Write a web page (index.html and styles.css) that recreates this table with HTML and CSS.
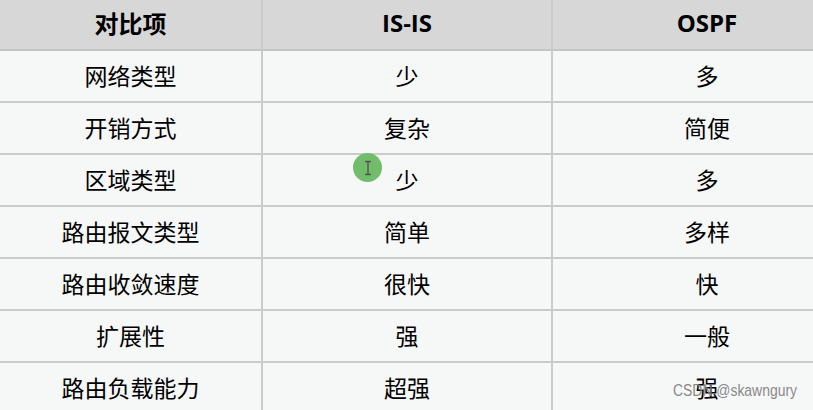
FILE: index.html
```html
<!DOCTYPE html>
<html lang="zh">
<head>
<meta charset="utf-8">
<link rel="stylesheet" href="styles.css">
</head>
<body>
<div class="stage">
  <div class="table">
    <div class="cell head">对比项</div>
    <div class="cell head">IS-IS</div>
    <div class="cell head">OSPF</div>

    <div class="cell">网络类型</div><div class="cell">少</div><div class="cell">多</div>
    <div class="cell">开销方式</div><div class="cell">复杂</div><div class="cell">简便</div>
    <div class="cell">区域类型</div><div class="cell">少</div><div class="cell">多</div>
    <div class="cell">路由报文类型</div><div class="cell">简单</div><div class="cell">多样</div>
    <div class="cell">路由收敛速度</div><div class="cell">很快</div><div class="cell">快</div>
    <div class="cell">扩展性</div><div class="cell">强</div><div class="cell">一般</div>
    <div class="cell">路由负载能力</div><div class="cell">超强</div><div class="cell">强</div>
  </div>
  <div class="cursor">
    <svg width="12" height="16" viewBox="0 0 12 16"><path d="M3 1.5h6M6 1.5v13M3 14.5h6" stroke="#555" stroke-width="1.4" fill="none"/></svg>
  </div>
  <div class="watermark">CSDN @skawngury</div>
</div>
</body>
</html>
```
FILE: styles.css
```css
html, body {
  margin: 0;
  padding: 0;
  background: #f6f7f7;
  overflow: hidden;
}
.stage {
  position: relative;
  width: 813px;
  height: 410px;
  overflow: hidden;
}
.table {
  display: grid;
  grid-template-columns: 263px 290px 310px;
  grid-template-rows: 51px repeat(7, 52px);
  width: 863px;
  font-family: "Open Sans", "Noto Sans CJK SC", sans-serif;
  font-size: 23px;
  color: #000;
  background: #f6f7f7;
}
.cell {
  display: flex;
  align-items: center;
  justify-content: center;
  border-right: 2px solid #cbcbcb;
  border-bottom: 2px solid #cbcbcb;
  box-sizing: border-box;
  padding-bottom: 2px;
}
.head {
  background: #d7d7d7;
  font-weight: 700;
  font-size: 24px;
  border-bottom-color: #c4c4c4;
  padding-bottom: 4px;
}
.cursor {
  position: absolute;
  left: 353px;
  top: 153px;
  width: 29px;
  height: 29px;
  border-radius: 50%;
  background: #72bd6c;
  display: flex;
  align-items: center;
  justify-content: center;
}
.watermark {
  position: absolute;
  left: 673px;
  top: 382px;
  font-family: "Liberation Sans", sans-serif;
  font-size: 16px;
  color: #8a8a8a;
  transform: scaleX(0.87);
  transform-origin: left center;
  white-space: nowrap;
}
```
